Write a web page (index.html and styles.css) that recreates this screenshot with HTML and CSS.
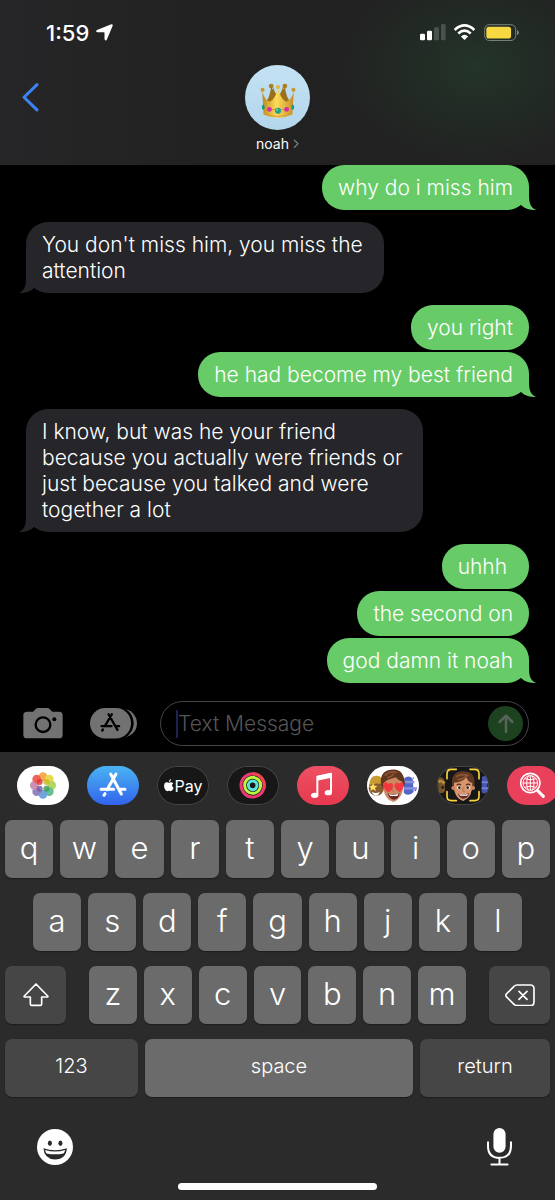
FILE: index.html
```html
<!DOCTYPE html>
<html lang="en">
<head>
    <meta charset="UTF-8">
    <meta name="viewport" content="width=device-width, initial-scale=1.0">
    <title>noah</title>
    <link rel="stylesheet" href="styles.css">
</head>
<body>
    <div class="phone">
        <header class="header">
            <div class="status">
                <span class="time">1:59</span>
                <svg class="location" viewBox="0 0 52 52"><path d="M47 1 Q52 0 51 5 L33 48 Q28 54 26 46 L26 27 Q26 25 24 25 L4 25 Q-3 24 3 18 Z" fill="#fff"/></svg>
                <svg class="signal" viewBox="0 0 78 50">
                    <g fill="#fff"><rect x="0" y="29" width="15" height="20" rx="4"/><rect x="21" y="20" width="15" height="29" rx="4"/></g>
                    <g fill="#4b514c"><rect x="42" y="10" width="15" height="39" rx="4"/><rect x="63" y="0" width="14" height="49" rx="4"/></g>
                </svg>
                <svg class="wifi" viewBox="0 0 64 50">
                    <g fill="none" stroke="#fff" stroke-width="8"><path d="M2 18 Q32 -9 62 18"/><path d="M13 29 Q32 12 51 29"/></g>
                    <path d="M21 38 Q32 28 43 38 L32 49 Z" fill="#fff"/>
                </svg>
                <svg class="battery" viewBox="0 0 106 52">
                    <rect x="2" y="2" width="94" height="48" rx="14" fill="none" stroke="#7b817c" stroke-width="3"/>
                    <rect x="7" y="8" width="75" height="36" rx="8" fill="#f6d843"/>
                    <path d="M100 18 Q106 20 106 26 Q106 32 100 34 Z" fill="#7b817c"/>
                </svg>
            </div>
            <div class="nav">
                <button class="back" aria-label="Back"><svg viewBox="0 0 50 84"><path d="M44 5 L6 42 L44 79" fill="none" stroke="#3b82f3" stroke-width="9" stroke-linecap="round" stroke-linejoin="round"/></svg></button>
                <a class="contact" href="#">
                    <span class="avatar">
                        <svg viewBox="0 0 100 105">
                            <defs>
                                <linearGradient id="gold" x1="0" x2="1">
                                    <stop offset="0" stop-color="#b98a22"/>
                                    <stop offset=".45" stop-color="#ffdc58"/>
                                    <stop offset="1" stop-color="#c58f29"/>
                                </linearGradient>
                            </defs>
                            <path d="M12 58 L30 34 Q36 20 36 12 Q40 30 50 40 Q60 30 64 12 Q66 30 88 58 Z" fill="#9b701d"/>
                            <circle cx="30" cy="9" r="7" fill="#ad7e26"/><circle cx="70" cy="9" r="7" fill="#ad7e26"/>
                            <path d="M12 62 Q27 40 30 10 Q40 30 50 44 Q60 30 70 10 Q73 40 88 62 Z" fill="#9b701d"/>
                            <path d="M4 23 Q10 48 26 55 Q43 45 50 15 Q57 45 74 55 Q90 48 96 23 L92 92 Q50 112 8 92 Z" fill="url(#gold)"/>
                            <circle cx="5" cy="20" r="6" fill="#c9982e"/><circle cx="50" cy="12" r="6" fill="#e6b63e"/><circle cx="95" cy="20" r="6" fill="#c9982e"/>
                            <path d="M8 69 Q50 87 92 69 M8 88 Q50 108 92 88" fill="none" stroke="#d49d35" stroke-width="3"/>
                            <ellipse cx="7" cy="71" rx="4" ry="8" fill="#179884"/><ellipse cx="93" cy="71" rx="4" ry="8" fill="#179884"/>
                            <circle cx="25" cy="77" r="7" fill="#d62cae"/><circle cx="75" cy="77" r="7" fill="#d62cae"/>
                            <circle cx="50" cy="81" r="9" fill="#25a18b"/><circle cx="47" cy="78" r="3" fill="#79d8c0"/>
                        </svg>
                    </span>
                    <span class="name">noah <svg viewBox="0 0 18 28"><path d="M3 2 L15 14 L3 26" fill="none" stroke="#77787a" stroke-width="4"/></svg></span>
                </a>
            </div>
        </header>

        <main class="messages">
            <p class="bubble sent tail">why do i miss him</p>
            <p class="bubble received tail">You don't miss him, you miss the<br>attention</p>
            <p class="bubble sent">you right</p>
            <p class="bubble sent tail">he had become my best friend</p>
            <p class="bubble received tail">I know, but was he your friend<br>because you actually were friends or<br>just because you talked and were<br>together a lot</p>
            <p class="bubble sent keep-space">uhhh </p>
            <p class="bubble sent">the second on</p>
            <p class="bubble sent tail">god damn it noah</p>
        </main>

        <form class="composer">
            <button type="button" class="camera" aria-label="Camera">
                <svg viewBox="0 0 120 92">
                    <path d="M12 11 H30 L38 3 Q41 0 46 0 H72 Q77 0 80 3 L88 11 H108 Q119 11 119 22 V80 Q119 91 108 91 H12 Q1 91 1 80 V22 Q1 11 12 11 Z" fill="#727272"/>
                    <circle cx="60" cy="50" r="22" fill="none" stroke="#000" stroke-width="7"/>
                    <circle cx="94" cy="34" r="6" fill="#000"/>
                </svg>
            </button>
            <button type="button" class="apps" aria-label="Apps">
                <svg viewBox="0 0 142 92">
                    <rect x="40" y="3" width="102" height="86" rx="43" fill="#727272"/>
                    <rect x="0" y="-4" width="132" height="100" rx="50" fill="#000"/>
                    <rect x="0" y="0" width="124" height="92" rx="46" fill="#727272"/>
                    <g fill="none" stroke="#000" stroke-width="7" stroke-linecap="round"><path d="M56 19 L83 66 M66 19 L45 55 M39 65 L37 68 M35 55 H65 M79 55 H88"/></g>
                </svg>
            </button>
            <label class="field">
                <span class="caret"></span>
                <input type="text" placeholder="Text Message" aria-label="Text Message">
                <button type="button" class="send" aria-label="Send"><svg viewBox="0 0 50 60"><path d="M25 56 V6 M5 25 L25 5 L45 25" fill="none" stroke="#58635a" stroke-width="8" stroke-linecap="round" stroke-linejoin="round"/></svg></button>
            </label>
        </form>

        <section class="keyboard">
            <nav class="strip">
                <a href="#" class="app photos" aria-label="Photos">
                    <svg viewBox="0 0 156 117">
                        <g opacity=".9">
                            <circle cx="78" cy="32" r="13" fill="#f7a23b"/>
                            <circle cx="97" cy="39" r="13" fill="#e4d63b"/>
                            <circle cx="104" cy="58" r="13" fill="#a8d34f"/>
                            <circle cx="97" cy="77" r="13" fill="#55b985"/>
                            <circle cx="78" cy="85" r="13" fill="#5d9fd8"/>
                            <circle cx="59" cy="77" r="13" fill="#8878bd"/>
                            <circle cx="52" cy="58" r="13" fill="#c784ac"/>
                            <circle cx="59" cy="39" r="13" fill="#ee5349"/>
                        </g>
                        <g opacity=".8"><circle cx="68" cy="48" r="9" fill="#df342e"/><circle cx="88" cy="48" r="9" fill="#c7b820"/><circle cx="88" cy="68" r="9" fill="#3f9b54"/><circle cx="68" cy="68" r="9" fill="#795a9b"/></g>
                        <circle cx="78" cy="58" r="4" fill="#fff"/>
                    </svg>
                </a>
                <a href="#" class="app store" aria-label="App Store">
                    <svg viewBox="0 0 156 117"><g fill="none" stroke="#fff" stroke-width="9" stroke-linecap="round"><path d="M71 24 L103 84 M87 24 L60 71 M54 83 L51 88 M42 70 H80 M99 70 H114"/></g></svg>
                </a>
                <a href="#" class="app pay" aria-label="Apple Pay">
                    <svg viewBox="0 0 30 38"><path d="M21 0 Q21 7 15 9 Q14 3 21 0 Z M15 11 Q22 7 28 13 Q20 20 29 27 Q24 39 19 36 Q15 34 11 36 Q6 39 1 27 Q-2 14 6 10 Q10 9 15 11 Z" fill="#fff"/></svg>
                    <span>Pay</span>
                </a>
                <a href="#" class="app rings" aria-label="Fitness">
                    <svg viewBox="0 0 156 117" fill="none" stroke-width="9">
                        <circle cx="77" cy="58" r="35" stroke="#ed3971"/>
                        <path d="M77 23 A35 35 0 0 1 111 66" stroke="#ef454d"/>
                        <circle cx="77" cy="58" r="24" stroke="#b9f642"/>
                        <circle cx="77" cy="58" r="13" stroke="#5ce3dc"/>
                    </svg>
                </a>
                <a href="#" class="app music" aria-label="Music">
                    <svg viewBox="0 0 156 117">
                        <path d="M61 86 V32 L102 23 V79" fill="none" stroke="#fff" stroke-width="6" stroke-linejoin="round"/>
                        <path d="M60 30 L103 21 V35 L60 44 Z" fill="#fff"/>
                        <ellipse cx="53" cy="88" rx="11" ry="8" fill="#fff"/><ellipse cx="94" cy="80" rx="11" ry="8" fill="#fff"/>
                    </svg>
                </a>
                <a href="#" class="app stickers" aria-label="Memoji Stickers">
                    <svg viewBox="0 0 156 117">
                        <path d="M112 36 Q126 26 137 38 L140 78 Q125 94 110 80 Z" fill="#5666c6"/>
                        <path d="M112 48 H142 M110 67 H150" stroke="#8793df" stroke-width="7"/>
                        <circle cx="145" cy="73" r="3" fill="#506bd9"/><circle cx="139" cy="36" r="2" fill="#506bd9"/>
                        <circle cx="28" cy="66" r="23" fill="#8b5c31"/>
                        <path d="M7 57 Q8 27 31 29 Q49 31 49 56 Q28 48 7 57" fill="#c99b32"/>
                        <path d="M18 50 L22 59 L31 60 L24 66 L27 75 L18 70 L10 75 L12 66 L6 60 L15 59 Z" fill="#ffe15c"/>
                        <path d="M14 77 Q27 85 38 77 Q35 89 25 89 Q17 87 14 77" fill="#fff"/>
                        <path d="M42 56 Q37 15 71 11 Q111 4 114 55 L105 69 H50 Z" fill="#63351f"/>
                        <path d="M49 52 Q55 42 86 34 Q95 45 106 47 Q115 90 80 108 Q48 101 49 52" fill="#c98a64"/>
                        <path d="M53 29 Q70 13 89 20 M61 36 Q76 31 81 23" stroke="#8d5331" stroke-width="5" fill="none"/>
                        <path d="M48 53 Q59 44 64 54 Q77 46 79 60 Q78 73 63 79 Q50 69 48 53 M82 57 Q86 44 95 53 Q108 44 111 56 Q108 71 99 79 Q82 70 82 57" fill="#f4383f"/>
                        <path d="M78 60 Q73 77 82 78" fill="none" stroke="#b6704f" stroke-width="3"/>
                        <path d="M62 82 Q81 91 98 80 Q95 100 80 101 Q67 99 62 82" fill="#6a2627"/><path d="M65 83 Q81 91 95 82 L91 90 H70 Z" fill="#fff"/>
                    </svg>
                </a>
                <a href="#" class="app memoji" aria-label="Memoji">
                    <svg viewBox="0 0 156 117">
                        <path d="M3 39 Q15 25 24 47 V75 Q14 87 5 78" fill="#76552e"/><path d="M4 48 Q12 42 23 52" stroke="#b49138" stroke-width="8"/><circle cx="17" cy="64" r="5" fill="#302620"/>
                        <path d="M135 33 Q147 24 151 42 V76 Q142 88 134 78 Z" fill="#4656ae"/><path d="M134 49 H153 M134 67 H154" stroke="#7180cf" stroke-width="6"/>
                        <path d="M45 55 Q42 20 73 16 Q118 12 112 61 L103 76 H51 Z" fill="#613821"/>
                        <path d="M51 50 Q75 50 88 34 Q92 48 106 51 Q108 93 79 105 Q48 95 51 50" fill="#d9966e"/>
                        <circle cx="49" cy="66" r="6" fill="#c98561"/><circle cx="108" cy="66" r="6" fill="#c98561"/>
                        <path d="M57 32 Q74 21 95 29 M62 41 Q79 40 88 29" fill="none" stroke="#8d5635" stroke-width="5"/>
                        <path d="M59 57 Q66 52 72 57 M87 57 Q94 52 100 57" fill="none" stroke="#53301f" stroke-width="4"/>
                        <ellipse cx="66" cy="65" rx="6" ry="5" fill="#fff"/><ellipse cx="93" cy="65" rx="6" ry="5" fill="#fff"/><circle cx="67" cy="65" r="4" fill="#352219"/><circle cx="92" cy="65" r="4" fill="#352219"/>
                        <path d="M79 65 Q74 78 83 77" fill="none" stroke="#ae6947" stroke-width="3"/>
                        <path d="M63 83 Q79 88 96 82 Q93 98 79 98 Q67 97 63 83" fill="#632b25"/><path d="M66 84 Q80 88 93 83 L90 89 H70 Z" fill="#fff"/>
                        <path d="M30 38 V23 Q30 10 43 10 H58 M99 10 H113 Q126 10 126 23 V38 M126 77 V91 Q126 104 113 104 H99 M58 104 H43 Q30 104 30 91 V77" fill="none" stroke="#f6d33f" stroke-width="5" stroke-linecap="round"/>
                    </svg>
                </a>
                <a href="#" class="app images" aria-label="Images">
                    <svg viewBox="0 0 156 117" fill="none" stroke="#fff">
                        <circle cx="70" cy="51" r="29" stroke-width="5"/>
                        <circle cx="70" cy="51" r="22" stroke-width="3"/>
                        <path d="M48 51 H92 M53 38 Q70 45 87 38 M53 64 Q70 57 87 64 M70 29 V73 M64 29 Q54 51 64 73 M76 29 Q86 51 76 73" stroke-width="3"/>
                        <path d="M91 73 L109 91" stroke-width="9" stroke-linecap="round"/>
                    </svg>
                </a>
            </nav>

            <div class="keys">
                <div class="row">
                    <button class="key">q</button>
                    <button class="key">w</button>
                    <button class="key">e</button>
                    <button class="key">r</button>
                    <button class="key">t</button>
                    <button class="key">y</button>
                    <button class="key">u</button>
                    <button class="key">i</button>
                    <button class="key">o</button>
                    <button class="key">p</button>
                </div>
                <div class="row middle">
                    <button class="key">a</button>
                    <button class="key">s</button>
                    <button class="key">d</button>
                    <button class="key">f</button>
                    <button class="key">g</button>
                    <button class="key">h</button>
                    <button class="key">j</button>
                    <button class="key">k</button>
                    <button class="key">l</button>
                </div>
                <div class="row lower">
                    <button class="key dark" aria-label="Shift"><svg class="shift" viewBox="0 0 78 70"><path d="M39 3 L74 39 Q76 42 72 42 H56 V63 Q56 67 52 67 H26 Q22 67 22 63 V42 H6 Q2 42 4 39 Z" fill="none" stroke="#fff" stroke-width="5" stroke-linejoin="round"/></svg></button>
                    <div class="row letters">
                        <button class="key">z</button>
                        <button class="key">x</button>
                        <button class="key">c</button>
                        <button class="key">v</button>
                        <button class="key">b</button>
                        <button class="key">n</button>
                        <button class="key">m</button>
                    </div>
                    <button class="key dark" aria-label="Delete"><svg class="delete" viewBox="0 0 90 68"><path d="M36 3 H76 Q87 3 87 14 V54 Q87 65 76 65 H36 Q31 65 27 61 L4 38 Q1 34 4 30 L27 7 Q31 3 36 3 Z M42 22 L66 46 M66 22 L42 46" fill="none" stroke="#fff" stroke-width="5" stroke-linecap="round"/></svg></button>
                </div>
                <div class="row bottom">
                    <button class="key dark">123</button>
                    <button class="key">space</button>
                    <button class="key dark">return</button>
                </div>
            </div>

            <div class="dock">
                <button class="emoji" aria-label="Emoji">
                    <svg viewBox="0 0 106 106">
                        <circle cx="53" cy="53" r="53" fill="#fff"/>
                        <ellipse cx="38" cy="42" rx="6" ry="8" fill="#2b2b2b"/><ellipse cx="69" cy="42" rx="6" ry="8" fill="#2b2b2b"/>
                        <path d="M19 57 Q53 68 88 57 Q86 89 53 90 Q21 89 19 57 Z" fill="#2b2b2b"/>
                        <path d="M24 62 Q53 71 83 62 Q81 70 78 72 Q53 77 28 72 Q25 69 24 62 Z" fill="#fff"/>
                    </svg>
                </button>
                <button class="mic" aria-label="Dictate">
                    <svg viewBox="0 0 74 112">
                        <rect x="19" y="0" width="36" height="73" rx="18" fill="#fff"/>
                        <path d="M3 42 V53 Q3 88 37 88 Q71 88 71 53 V42 M37 88 V106 M13 108 H61" fill="none" stroke="#fff" stroke-width="6" stroke-linecap="round"/>
                    </svg>
                </button>
            </div>
            <div class="home"></div>
        </section>
    </div>
</body>
</html>
```
FILE: styles.css
```css
* {
    box-sizing: border-box;
}
body {
    margin: 0;
    background-color: #000;
    color: #fff;
    font-family: Inter, "Liberation Sans", sans-serif;
}
button {
    display: flex;
    align-items: center;
    justify-content: center;
    margin: 0;
    padding: 0;
    border: 0;
    background: none;
    color: inherit;
    font-family: inherit;
    cursor: pointer;
}
a {
    color: inherit;
    text-decoration: none;
}
svg {
    display: block;
}
.phone {
    display: flex;
    flex-direction: column;
    min-height: 100vh;
    overflow: hidden;
}

/* header */
.header {
    padding-bottom: 12px;
    background: radial-gradient(ellipse 140px 100px at 86% 40%, #233428, rgba(33, 33, 33, 0)), linear-gradient(90deg, #262628, #212121 40%);
}
.status {
    display: flex;
    align-items: center;
    height: 65px;
    padding: 0 36px 0 46px;
}
.status .time {
    font-size: 22px;
    font-weight: 500;
}
.status .location {
    width: 17px;
    margin-left: 7px;
}
.status .signal {
    width: 26px;
    margin-left: auto;
}
.status .wifi {
    width: 21px;
    margin: 0 9px 0 8px;
}
.status .battery {
    width: 35px;
}
.nav {
    display: grid;
    grid-template-columns: 1fr auto 1fr;
    align-items: start;
}
.back {
    width: 60px;
    height: 65px;
}
.back svg {
    width: 17px;
}
.contact {
    display: flex;
    flex-direction: column;
    align-items: center;
    gap: 5px;
}
.avatar {
    display: flex;
    align-items: center;
    justify-content: center;
    width: 65px;
    height: 65px;
    padding-top: 6px;
    border-radius: 50%;
    background: linear-gradient(#c3e2f4, #b4d6eb);
}
.avatar svg {
    width: 40px;
    height: 36px;
}
.name {
    display: flex;
    align-items: center;
    gap: 4px;
    font-size: 14px;
    line-height: 18px;
}
.name svg {
    width: 6px;
}

/* messages */
.messages {
    display: flex;
    flex-direction: column;
    align-items: flex-start;
    padding: 0 26px;
}
.bubble {
    position: relative;
    margin: 0;
    padding: 10px 16px 9px;
    border-radius: 22px;
    font-size: 21px;
    font-weight: 300;
    line-height: 26px;
}
.sent {
    align-self: flex-end;
    background-color: #67cc68;
}
.received {
    padding-right: 21px;
    background-color: #26262a;
}
.keep-space {
    white-space: pre;
}
.sent + .sent {
    margin-top: 2px;
}
.sent + .received,
.received + .sent {
    margin-top: 12px;
}
.tail::after {
    content: "";
    position: absolute;
    bottom: 0;
    width: 22px;
    height: 24px;
    background-color: inherit;
}
.sent.tail::after {
    right: -7px;
    clip-path: path("M15 0 V10 C15 17 17 22 22 24 C16 24 11 23 7 19 L0 14 V0 Z");
}
.received.tail::after {
    left: -7px;
    clip-path: path("M7 0 V10 C7 17 5 22 0 24 C6 24 11 23 15 19 L22 14 V0 Z");
}

/* composer */
.composer {
    display: flex;
    align-items: center;
    margin-top: auto;
    padding: 18px 26px 6px 23px;
}
.camera svg {
    width: 40px;
}
.apps {
    margin: 0 23px 0 27px;
}
.apps svg {
    width: 47px;
}
.field {
    display: flex;
    flex: 1;
    align-items: center;
    min-width: 0;
    height: 45px;
    padding: 0 5px 0 15px;
    border: 1px solid #454547;
    border-radius: 23px;
}
.caret {
    width: 2px;
    height: 28px;
    background-color: #1b2450;
}
.field input {
    flex: 1;
    width: 100%;
    min-width: 0;
    padding: 0;
    border: 0;
    outline: 0;
    background: none;
    color: #fff;
    font-family: inherit;
    font-size: 21px;
    font-weight: 300;
}
.field input::placeholder {
    color: #555557;
    opacity: 1;
}
.send {
    flex: none;
    width: 35px;
    height: 35px;
    border-radius: 50%;
    background-color: #1d421f;
}
.send svg {
    width: 16px;
}

/* keyboard */
.keyboard {
    padding-bottom: 11px;
    background-color: #2b2b2b;
}
.strip {
    display: flex;
    gap: 18px;
    padding: 14px 0 15px 17px;
    overflow: hidden;
}
.app {
    display: flex;
    flex: none;
    align-items: center;
    justify-content: center;
    width: 52px;
    height: 39px;
    border-radius: 20px;
    overflow: hidden;
}
.app svg {
    width: 52px;
}
.photos,
.stickers {
    background-color: #fff;
}
.store {
    background: linear-gradient(#4ab4f2, #3263ed);
}
.pay,
.rings,
.memoji {
    background-color: #171718;
    box-shadow: inset 0 0 0 1px #444;
}
.app.pay {
    gap: 1px;
    font-size: 16px;
}
.app.pay svg {
    width: 10px;
}
.music {
    background: linear-gradient(#ed5163, #e5394f);
}
.images {
    background-color: #e9415c;
}
.keys {
    display: flex;
    flex-direction: column;
    gap: 15px;
    padding: 0 5px;
}
.row {
    display: flex;
    gap: 7px;
}
.middle {
    padding: 0 28px;
}
.key {
    flex: 1;
    height: 58px;
    padding-bottom: 4px;
    border-radius: 7px;
    background-color: #6b6b6b;
    box-shadow: 0 1px 1px #1c1c1c;
    font-size: 31px;
    font-weight: 300;
}
.dark {
    padding-bottom: 0;
    background-color: #464646;
}
.lower {
    display: grid;
    grid-template-columns: 61fr 377fr 61fr;
    gap: 23px;
}
.letters {
    gap: 7px;
}
.bottom {
    display: grid;
    grid-template-columns: 133fr 268fr 130fr;
}
.bottom .key {
    padding-bottom: 4px;
    font-size: 20px;
}
.shift {
    width: 26px;
}
.delete {
    width: 30px;
}
.dock {
    display: flex;
    align-items: center;
    justify-content: space-between;
    padding: 31px 43px 17px 37px;
}
.emoji svg {
    width: 36px;
}
.mic svg {
    width: 25px;
}
.home {
    width: 36%;
    height: 7px;
    margin: 0 auto;
    border-radius: 4px;
    background-color: #fff;
}
```
